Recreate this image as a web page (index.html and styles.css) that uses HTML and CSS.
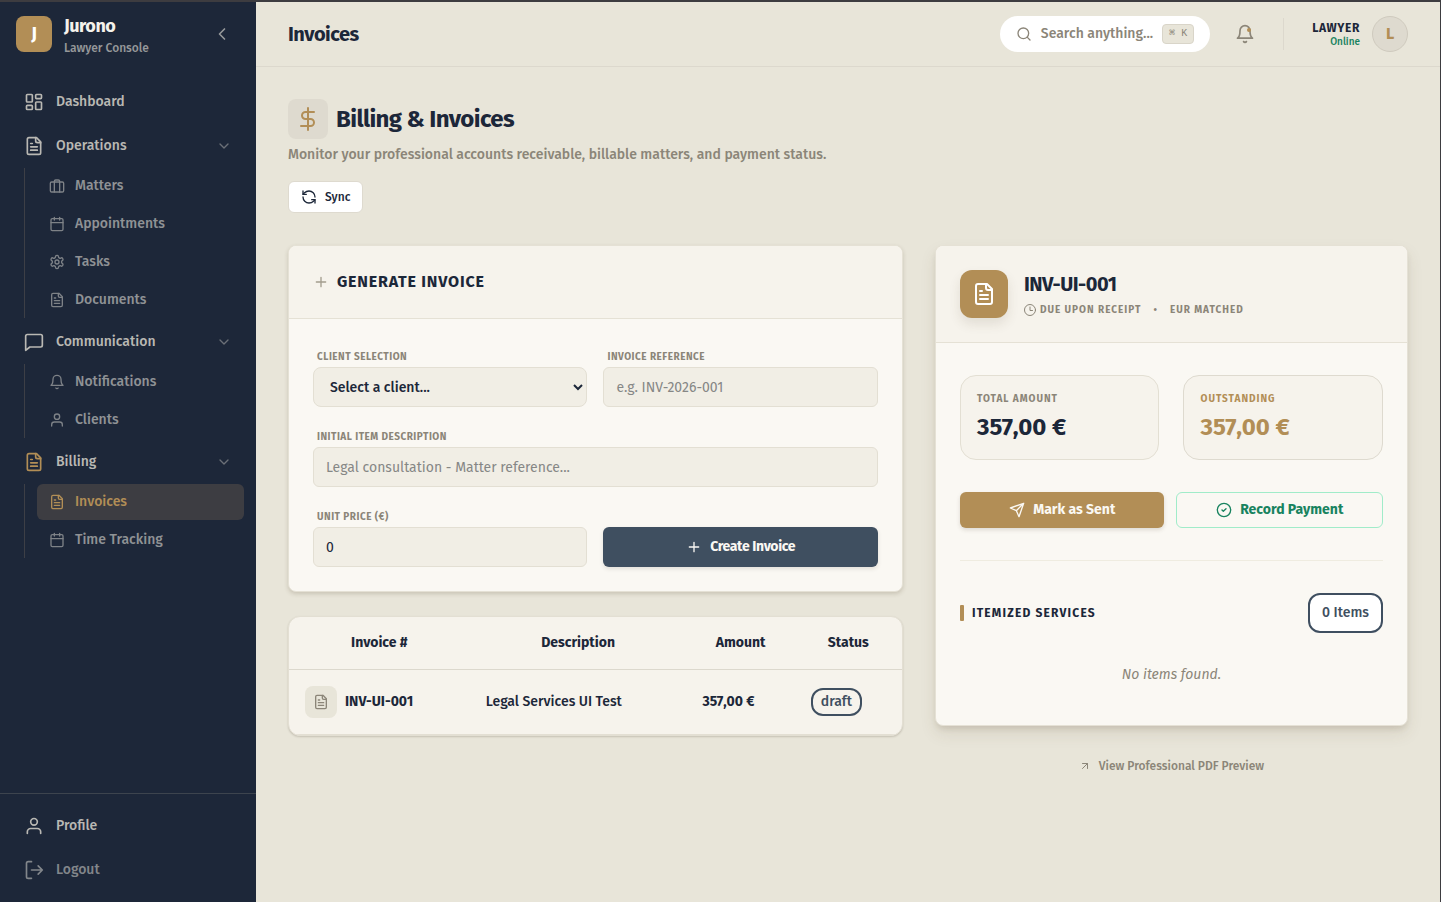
FILE: index.html
```html
<!DOCTYPE html>
<html lang="en">
  <head>
    <meta charset="UTF-8" />
    <meta name="viewport" content="width=device-width, initial-scale=1.0" />
    <title>Invoices - Jurono</title>
    <link rel="stylesheet" href="styles.css">
  </head>

  <body>
    <svg class="sprite" aria-hidden="true">
      <symbol id="i-grid" viewBox="0 0 24 24">
        <rect x="3" y="3" width="7" height="9" rx="1" />
        <rect x="14" y="3" width="7" height="5" rx="1" />
        <rect x="14" y="12" width="7" height="9" rx="1" />
        <rect x="3" y="16" width="7" height="5" rx="1" />
      </symbol>
      <symbol id="i-file" viewBox="0 0 24 24">
        <path d="M15 2H6a2 2 0 0 0-2 2v16a2 2 0 0 0 2 2h12a2 2 0 0 0 2-2V7Z" />
        <path d="M14 2v4a2 2 0 0 0 2 2h4M10 9H8M16 13H8M16 17H8" />
      </symbol>
      <symbol id="i-case" viewBox="0 0 24 24">
        <rect x="2" y="6" width="20" height="15" rx="2" />
        <path d="M16 21V5a2 2 0 0 0-2-2h-4a2 2 0 0 0-2 2v16" />
      </symbol>
      <symbol id="i-calendar" viewBox="0 0 24 24">
        <rect x="3" y="4" width="18" height="18" rx="2" />
        <path d="M8 2v4M16 2v4M3 10h18" />
      </symbol>
      <symbol id="i-gear" viewBox="0 0 24 24">
        <path d="M12.22 2h-.44a2 2 0 0 0-2 2v.18a2 2 0 0 1-1 1.73l-.43.25a2 2 0 0 1-2 0l-.15-.08a2 2 0 0 0-2.73.73l-.22.38a2 2 0 0 0 .73 2.73l.15.1a2 2 0 0 1 1 1.72v.51a2 2 0 0 1-1 1.74l-.15.09a2 2 0 0 0-.73 2.73l.22.38a2 2 0 0 0 2.73.73l.15-.08a2 2 0 0 1 2 0l.43.25a2 2 0 0 1 1 1.73V20a2 2 0 0 0 2 2h.44a2 2 0 0 0 2-2v-.18a2 2 0 0 1 1-1.73l.43-.25a2 2 0 0 1 2 0l.15.08a2 2 0 0 0 2.73-.73l.22-.39a2 2 0 0 0-.73-2.73l-.15-.08a2 2 0 0 1-1-1.74v-.5a2 2 0 0 1 1-1.74l.15-.09a2 2 0 0 0 .73-2.73l-.22-.38a2 2 0 0 0-2.73-.73l-.15.08a2 2 0 0 1-2 0l-.43-.25a2 2 0 0 1-1-1.73V4a2 2 0 0 0-2-2z" />
        <circle cx="12" cy="12" r="3" />
      </symbol>
      <symbol id="i-chat" viewBox="0 0 24 24">
        <path d="M22 16a2 2 0 0 1-2 2H7l-5 4V5a2 2 0 0 1 2-2h16a2 2 0 0 1 2 2z" />
      </symbol>
      <symbol id="i-bell" viewBox="0 0 24 24">
        <path d="M6 8a6 6 0 0 1 12 0c0 7 3 9 3 9H3s3-2 3-9" />
        <path d="M10.3 21a1.94 1.94 0 0 0 3.4 0" />
      </symbol>
      <symbol id="i-user" viewBox="0 0 24 24">
        <path d="M20 21v-2a4 4 0 0 0-4-4H8a4 4 0 0 0-4 4v2" />
        <circle cx="12" cy="7" r="4" />
      </symbol>
      <symbol id="i-logout" viewBox="0 0 24 24">
        <path d="M9 22H5a2 2 0 0 1-2-2V4a2 2 0 0 1 2-2h4M17 17l5-5-5-5M22 12H9" />
      </symbol>
      <symbol id="i-down" viewBox="0 0 24 24"><path d="m6 9 6 6 6-6" /></symbol>
      <symbol id="i-left" viewBox="0 0 24 24"><path d="m15 18-6-6 6-6" /></symbol>
      <symbol id="i-search" viewBox="0 0 24 24">
        <circle cx="11" cy="11" r="8" />
        <path d="m21 21-4.3-4.3" />
      </symbol>
      <symbol id="i-dollar" viewBox="0 0 24 24">
        <path d="M12 1v22M18 5H9.5a3.5 3.5 0 0 0 0 7h5a3.5 3.5 0 0 1 0 7H5" />
      </symbol>
      <symbol id="i-sync" viewBox="0 0 24 24">
        <path d="M21 12a9 9 0 0 0-9-9 9.75 9.75 0 0 0-6.74 2.74L3 8" />
        <path d="M3 3v5h5" />
        <path d="M3 12a9 9 0 0 0 9 9 9.75 9.75 0 0 0 6.74-2.74L21 16" />
        <path d="M16 16h5v5" />
      </symbol>
      <symbol id="i-plus" viewBox="0 0 24 24"><path d="M5 12h14M12 5v14" /></symbol>
      <symbol id="i-clock" viewBox="0 0 24 24">
        <circle cx="12" cy="12" r="11" />
        <path d="M12 6v7h5" />
      </symbol>
      <symbol id="i-send" viewBox="0 0 24 24">
        <path d="m22 2-7 20-4-9-9-4ZM22 2 11 13" />
      </symbol>
      <symbol id="i-check" viewBox="0 0 24 24">
        <circle cx="12" cy="12" r="10" />
        <path d="m9 12 2 2 4-4" />
      </symbol>
      <symbol id="i-arrow" viewBox="0 0 24 24"><path d="M7 17 17 7M7 7h10v10" /></symbol>
    </svg>

    <div class="app">
      <aside class="sidebar">
        <div class="brand">
          <span class="brand-logo">J</span>
          <div class="brand-text">
            <strong>Jurono</strong>
            <span>Lawyer Console</span>
          </div>
          <button class="collapse" aria-label="Collapse sidebar">
            <svg class="icon icon-20"><use href="#i-left" /></svg>
          </button>
        </div>

        <nav class="nav">
          <a class="nav-item" href="#"><svg class="icon icon-20"><use href="#i-grid" /></svg>Dashboard</a>
          <div class="nav-group">
            <button class="nav-item">
              <svg class="icon icon-20"><use href="#i-file" /></svg>Operations
              <svg class="icon icon-16 caret"><use href="#i-down" /></svg>
            </button>
            <div class="subnav">
              <a href="#"><svg class="icon icon-16"><use href="#i-case" /></svg>Matters</a>
              <a href="#"><svg class="icon icon-16"><use href="#i-calendar" /></svg>Appointments</a>
              <a href="#"><svg class="icon icon-16"><use href="#i-gear" /></svg>Tasks</a>
              <a href="#"><svg class="icon icon-16"><use href="#i-file" /></svg>Documents</a>
            </div>
          </div>
          <div class="nav-group">
            <button class="nav-item">
              <svg class="icon icon-20"><use href="#i-chat" /></svg>Communication
              <svg class="icon icon-16 caret"><use href="#i-down" /></svg>
            </button>
            <div class="subnav">
              <a href="#"><svg class="icon icon-16"><use href="#i-bell" /></svg>Notifications</a>
              <a href="#"><svg class="icon icon-16"><use href="#i-user" /></svg>Clients</a>
            </div>
          </div>
          <div class="nav-group">
            <button class="nav-item">
              <svg class="icon icon-20 gold"><use href="#i-file" /></svg>Billing
              <svg class="icon icon-16 caret"><use href="#i-down" /></svg>
            </button>
            <div class="subnav">
              <a class="active" href="#"><svg class="icon icon-16"><use href="#i-file" /></svg>Invoices</a>
              <a href="#"><svg class="icon icon-16"><use href="#i-calendar" /></svg>Time Tracking</a>
            </div>
          </div>
        </nav>

        <div class="sidebar-footer">
          <a class="nav-item" href="#"><svg class="icon icon-20"><use href="#i-user" /></svg>Profile</a>
          <button class="nav-item logout"><svg class="icon icon-20"><use href="#i-logout" /></svg>Logout</button>
        </div>
      </aside>

      <div class="main">
        <header class="topbar">
          <h2>Invoices</h2>
          <button class="search">
            <svg class="icon icon-16"><use href="#i-search" /></svg>
            <span>Search anything...</span>
            <kbd>⌘ K</kbd>
          </button>
          <button class="bell" aria-label="Notifications">
            <svg class="icon icon-20"><use href="#i-bell" /></svg>
            <span class="bell-dot"></span>
          </button>
          <div class="user">
            <div class="user-text">
              <strong>LAWYER</strong>
              <span>Online</span>
            </div>
            <span class="avatar">L</span>
          </div>
        </header>

        <main class="content">
          <div class="page-title">
            <span class="title-icon"><svg class="icon icon-24"><use href="#i-dollar" /></svg></span>
            <h1>Billing &amp; Invoices</h1>
          </div>
          <p class="subtitle">Monitor your professional accounts receivable, billable matters, and payment status.</p>
          <button class="btn-sync"><svg class="icon icon-16"><use href="#i-sync" /></svg>Sync</button>

          <div class="columns">
            <div class="column">
              <section class="card">
                <div class="card-head">
                  <svg class="icon icon-16"><use href="#i-plus" /></svg>
                  <h3>GENERATE INVOICE</h3>
                </div>
                <form class="form">
                  <div class="field">
                    <label for="client">CLIENT SELECTION</label>
                    <select id="client"><option>Select a client...</option></select>
                  </div>
                  <div class="field">
                    <label for="reference">INVOICE REFERENCE</label>
                    <input id="reference" type="text" placeholder="e.g. INV-2026-001" />
                  </div>
                  <div class="field wide">
                    <label for="description">INITIAL ITEM DESCRIPTION</label>
                    <input id="description" type="text" placeholder="Legal consultation - Matter reference..." />
                  </div>
                  <div class="field">
                    <label for="price">UNIT PRICE (€)</label>
                    <input id="price" type="number" value="0" />
                  </div>
                  <button class="btn-create" type="button">
                    <svg class="icon icon-16"><use href="#i-plus" /></svg>Create Invoice
                  </button>
                </form>
              </section>

              <section class="table-card">
                <table>
                  <thead>
                    <tr>
                      <th>Invoice #</th>
                      <th>Description</th>
                      <th>Amount</th>
                      <th>Status</th>
                    </tr>
                  </thead>
                  <tbody>
                    <tr>
                      <td>
                        <div class="invoice-cell">
                          <span class="file-tile"><svg class="icon icon-16"><use href="#i-file" /></svg></span>
                          <strong>INV-UI-001</strong>
                        </div>
                      </td>
                      <td>Legal Services UI Test</td>
                      <td><strong>357,00 €</strong></td>
                      <td><span class="badge">draft</span></td>
                    </tr>
                  </tbody>
                </table>
              </section>
            </div>

            <div class="column-side">
              <section class="card card-raised">
                <div class="card-head detail-head">
                  <span class="detail-icon"><svg class="icon icon-24"><use href="#i-file" /></svg></span>
                  <div>
                    <h2>INV-UI-001</h2>
                    <div class="meta">
                      <svg class="icon icon-12"><use href="#i-clock" /></svg>
                      <span>DUE UPON RECEIPT</span>
                      <span class="meta-dot">•</span>
                      <span>EUR MATCHED</span>
                    </div>
                  </div>
                </div>
                <div class="detail-body">
                  <div class="stats">
                    <div class="stat">
                      <span>TOTAL AMOUNT</span>
                      <strong>357,00 €</strong>
                    </div>
                    <div class="stat stat-gold">
                      <span>OUTSTANDING</span>
                      <strong>357,00 €</strong>
                    </div>
                  </div>
                  <div class="actions">
                    <button class="btn-sent"><svg class="icon icon-16"><use href="#i-send" /></svg>Mark as Sent</button>
                    <button class="btn-payment"><svg class="icon icon-16"><use href="#i-check" /></svg>Record Payment</button>
                  </div>
                  <div class="items">
                    <div class="items-head">
                      <span class="items-bar"></span>
                      <h4>ITEMIZED SERVICES</h4>
                      <span class="badge badge-large">0 Items</span>
                    </div>
                    <p class="empty">No items found.</p>
                  </div>
                </div>
              </section>
              <a class="pdf-link" href="#"><svg class="icon icon-12"><use href="#i-arrow" /></svg>View Professional PDF Preview</a>
            </div>
          </div>
        </main>
      </div>
    </div>
  </body>
</html>
```

FILE: styles.css
```css
* {
  box-sizing: border-box;
}

body {
  margin: 0;
  border-top: 2px solid #3d3c40;
  border-right: 1px solid #3d3c40;
  background: #e8e5d9;
  color: #1c2739;
  font-family: "Fira Sans", Roboto, "Noto Sans", sans-serif;
  font-size: 14px;
  line-height: 20px;
}

h1,
h2,
h3,
h4,
p {
  margin: 0;
}

button,
input,
select {
  font: inherit;
  color: inherit;
}

button {
  border: none;
  background: none;
  padding: 0;
  cursor: pointer;
}

a {
  color: inherit;
  text-decoration: none;
}

.sprite {
  display: none;
}

.icon {
  flex: none;
  fill: none;
  stroke: currentColor;
  stroke-width: 2;
  stroke-linecap: round;
  stroke-linejoin: round;
}

.icon-12 {
  width: 12px;
  height: 12px;
}

.icon-16 {
  width: 16px;
  height: 16px;
}

.icon-20 {
  width: 20px;
  height: 20px;
}

.icon-24 {
  width: 24px;
  height: 24px;
}

.gold {
  color: #b28e56;
}

.app {
  display: flex;
  min-height: calc(100vh - 2px);
}

/* sidebar */
.sidebar {
  flex: none;
  display: flex;
  flex-direction: column;
  width: 256px;
  background: #1d2739;
  color: #b9b8b3;
}

.brand {
  display: flex;
  align-items: center;
  gap: 12px;
  height: 64px;
  padding: 0 24px 0 16px;
}

.brand-logo {
  display: flex;
  align-items: center;
  justify-content: center;
  width: 36px;
  height: 36px;
  border-radius: 8px;
  background: #b28e56;
  color: #fff;
  font-size: 18px;
  font-weight: 700;
}

.brand-text {
  display: flex;
  flex-direction: column;
  flex: 1;
}

.brand-text strong {
  color: #f5f2eb;
  font-size: 18px;
  line-height: 28px;
  letter-spacing: -0.025em;
}

.brand-text span {
  color: #96989a;
  font-size: 12px;
  font-weight: 500;
  line-height: 16px;
}

.collapse {
  display: flex;
  color: #96989a;
}

.nav {
  display: flex;
  flex-direction: column;
  flex: 1;
  gap: 4px;
  padding: 16px 12px;
}

.nav-item {
  display: flex;
  align-items: center;
  gap: 12px;
  width: 100%;
  height: 40px;
  padding: 0 12px;
  font-weight: 500;
}

.caret {
  margin-left: auto;
  color: #6b7077;
}

.subnav {
  display: flex;
  flex-direction: column;
  gap: 2px;
  margin: 2px 0 0 12px;
  padding-left: 12px;
  border-left: 1px solid #3d3f46;
}

.subnav a {
  display: flex;
  align-items: center;
  gap: 10px;
  height: 36px;
  padding: 0 12px;
  border-radius: 6px;
  color: #8f9295;
  font-weight: 500;
}

.subnav .icon {
  opacity: 0.85;
}

.subnav .active {
  background: #3d3d42;
  color: #b28e56;
}

.subnav .active .icon {
  opacity: 1;
}

.sidebar-footer {
  display: flex;
  flex-direction: column;
  gap: 4px;
  padding: 12px;
  border-top: 1px solid #3d444e;
}

.logout {
  color: #82868b;
}

/* top bar */
.main {
  flex: 1;
  min-width: 0;
}

.topbar {
  display: flex;
  align-items: center;
  height: 65px;
  padding: 0 32px;
  border-bottom: 1px solid #dcd8cd;
}

.topbar h2 {
  margin-right: auto;
  font-size: 20px;
  line-height: 28px;
  letter-spacing: -0.025em;
}

.search {
  display: flex;
  align-items: center;
  gap: 9px;
  height: 36px;
  padding: 0 16px;
  border-radius: 18px;
  background: #fff;
  color: #8b8578;
  font-weight: 500;
}

kbd {
  padding: 0 6px;
  border: 1px solid #d9d5c9;
  border-radius: 4px;
  background: #e8e5d9;
  font-family: "Liberation Mono", monospace;
  font-size: 10px;
  font-weight: 400;
  line-height: 18px;
}

.bell {
  position: relative;
  display: flex;
  margin: 0 28px 0 25px;
  color: #8b8578;
}

.bell-dot {
  position: absolute;
  top: 4px;
  right: 4px;
  width: 4px;
  height: 4px;
  border-radius: 50%;
  background: #b28e56;
}

.user {
  display: flex;
  align-items: center;
  gap: 12px;
  height: 32px;
  padding-left: 28px;
  border-left: 1px solid #dcd8cd;
}

.user-text {
  display: flex;
  flex-direction: column;
  text-align: right;
}

.user-text strong {
  font-size: 12px;
  line-height: 16px;
  letter-spacing: 0.05em;
}

.user-text span {
  color: #18835f;
  font-size: 10px;
  font-weight: 500;
  line-height: 12px;
}

.avatar {
  display: flex;
  align-items: center;
  justify-content: center;
  width: 36px;
  height: 36px;
  border: 1px solid #cfcabe;
  border-radius: 50%;
  background: #dedacf;
  color: #b28e56;
  font-size: 16px;
  font-weight: 700;
}

/* page */
.content {
  padding: 32px;
}

.page-title {
  display: flex;
  align-items: center;
  gap: 8px;
}

.title-icon {
  display: flex;
  align-items: center;
  justify-content: center;
  width: 40px;
  height: 40px;
  border-radius: 8px;
  background: #dedacf;
  color: #b28e56;
}

h1 {
  font-size: 24px;
  line-height: 32px;
  letter-spacing: -0.025em;
}

.subtitle {
  margin-top: 6px;
  color: #8b8578;
  font-weight: 500;
}

.btn-sync {
  display: flex;
  align-items: center;
  gap: 8px;
  height: 32px;
  margin: 16px 0 32px;
  padding: 0 12px;
  border: 1px solid #dedacf;
  border-radius: 6px;
  background: #fff;
  font-size: 12px;
  font-weight: 500;
}

.columns {
  display: grid;
  grid-template-columns: 13fr 10fr;
  align-items: start;
  gap: 32px;
}

.column {
  display: grid;
  gap: 24px;
}

.card {
  border: 1px solid #e5e1d5;
  border-radius: 8px;
  background: #faf8f3;
  box-shadow: 0 2px 4px rgba(80, 65, 40, 0.2);
  overflow: hidden;
}

.card-raised {
  box-shadow: 0 8px 16px rgba(90, 70, 40, 0.1), 0 4px 6px -2px rgba(80, 65, 40, 0.16);
}

.card-head {
  display: flex;
  align-items: center;
  gap: 8px;
  padding: 24px;
  border-bottom: 1px solid #e5e1d5;
  background: #f6f3ec;
}

.card-head .icon-16 {
  color: #a39d8d;
}

.card-head h3 {
  font-size: 16px;
  line-height: 24px;
  letter-spacing: 0.05em;
}

.form {
  display: grid;
  grid-template-columns: 1fr 1fr;
  align-items: end;
  gap: 16px;
  padding: 24px;
}

.wide {
  grid-column: span 2;
}

.field label {
  display: block;
  padding: 7px 4px 3px;
  color: #8b8578;
  font-size: 10px;
  font-weight: 700;
  line-height: 14px;
  letter-spacing: 0.05em;
}

.field input,
.field select {
  display: block;
  width: 100%;
  height: 40px;
  padding: 0 12px;
  border: 1px solid #e3dfd3;
  border-radius: 6px;
  background: #f1eee5;
}

.field select {
  border-radius: 8px;
  font-weight: 500;
}

.field input::placeholder {
  color: #868785;
}

.btn-create {
  display: flex;
  align-items: center;
  justify-content: center;
  gap: 8px;
  height: 40px;
  border-radius: 6px;
  background: #3f4f60;
  box-shadow: 0 2px 4px rgba(60, 50, 30, 0.12);
  color: #faf8f3;
  font-weight: 700;
  letter-spacing: -0.025em;
}

/* invoice list */
.table-card {
  border: 1px solid #e3dfd3;
  border-radius: 12px;
  background: #f6f3ec;
  box-shadow: 0 1px 2px rgba(60, 50, 30, 0.2);
  overflow: hidden;
}

table {
  width: 100%;
  border-collapse: collapse;
}

th {
  height: 52px;
  padding: 0 16px;
  border-bottom: 1px solid #dcd8cd;
  text-align: center;
}

td {
  height: 65px;
  padding: 0 16px;
  border-bottom: 1px solid #e3dfd3;
  font-weight: 500;
}

.invoice-cell {
  display: flex;
  align-items: center;
  gap: 8px;
}

.file-tile {
  display: flex;
  align-items: center;
  justify-content: center;
  width: 32px;
  height: 32px;
  border-radius: 8px;
  background: #e8e5d9;
  color: #8b8578;
}

.badge {
  display: inline-block;
  padding: 2px 8px;
  border: 2px solid #3f4f60;
  border-radius: 12px;
  color: #3f4f60;
}

.badge-large {
  margin-left: auto;
  padding: 8px 12px;
  background: #fff;
  font-weight: 500;
}

/* invoice detail */
.detail-head {
  gap: 16px;
}

.detail-icon {
  display: flex;
  align-items: center;
  justify-content: center;
  width: 48px;
  height: 48px;
  border-radius: 12px;
  background: #b28e56;
  box-shadow: 0 6px 12px rgba(80, 65, 40, 0.12);
  color: #fff;
}

.detail-head h2 {
  font-size: 20px;
  line-height: 28px;
  letter-spacing: -0.025em;
}

.meta {
  display: flex;
  align-items: center;
  gap: 4px;
  margin-top: 4px;
  color: #8b8578;
  font-size: 10px;
  font-weight: 700;
  line-height: 16px;
  letter-spacing: 0.1em;
}

.meta-dot {
  padding: 0 8px;
}

.detail-body {
  padding: 32px 24px;
}

.stats {
  display: grid;
  grid-template-columns: 1fr 1fr;
  gap: 24px;
}

.stat {
  display: flex;
  flex-direction: column;
  gap: 4px;
  padding: 16px;
  border: 1px solid #e3dfd3;
  border-radius: 16px;
  background: #f6f3ec;
}

.stat span {
  color: #8b8578;
  font-size: 10px;
  font-weight: 700;
  line-height: 15px;
  letter-spacing: 0.1em;
}

.stat strong {
  font-size: 24px;
  line-height: 32px;
}

.stat-gold {
  border-color: #dedacf;
}

.stat-gold span,
.stat-gold strong {
  color: #b28e56;
}

.actions {
  display: flex;
  gap: 12px;
  padding: 32px 0;
  border-bottom: 1px solid #efece0;
}

.actions button {
  display: flex;
  align-items: center;
  justify-content: center;
  flex: 1;
  gap: 8px;
  height: 36px;
  border-radius: 6px;
  font-weight: 700;
}

.actions .btn-sent {
  background: #b28e56;
  box-shadow: 0 2px 4px rgba(60, 50, 30, 0.15);
  color: #faf8f3;
}

.actions .btn-payment {
  border: 1px solid #a0ecc9;
  color: #18835f;
}

.items {
  padding-top: 32px;
}

.items-head {
  display: flex;
  align-items: center;
  gap: 8px;
}

.items-bar {
  width: 4px;
  height: 16px;
  border-radius: 1px;
  background: #b28e56;
}

.items-head h4 {
  font-size: 12px;
  line-height: 16px;
  letter-spacing: 0.1em;
}

.empty {
  padding: 32px 0 8px;
  color: #8b8578;
  font-style: italic;
  text-align: center;
}

.pdf-link {
  display: flex;
  align-items: center;
  justify-content: center;
  gap: 8px;
  margin-top: 32px;
  color: #8b8578;
  font-size: 12px;
  font-weight: 500;
  line-height: 16px;
}
```
